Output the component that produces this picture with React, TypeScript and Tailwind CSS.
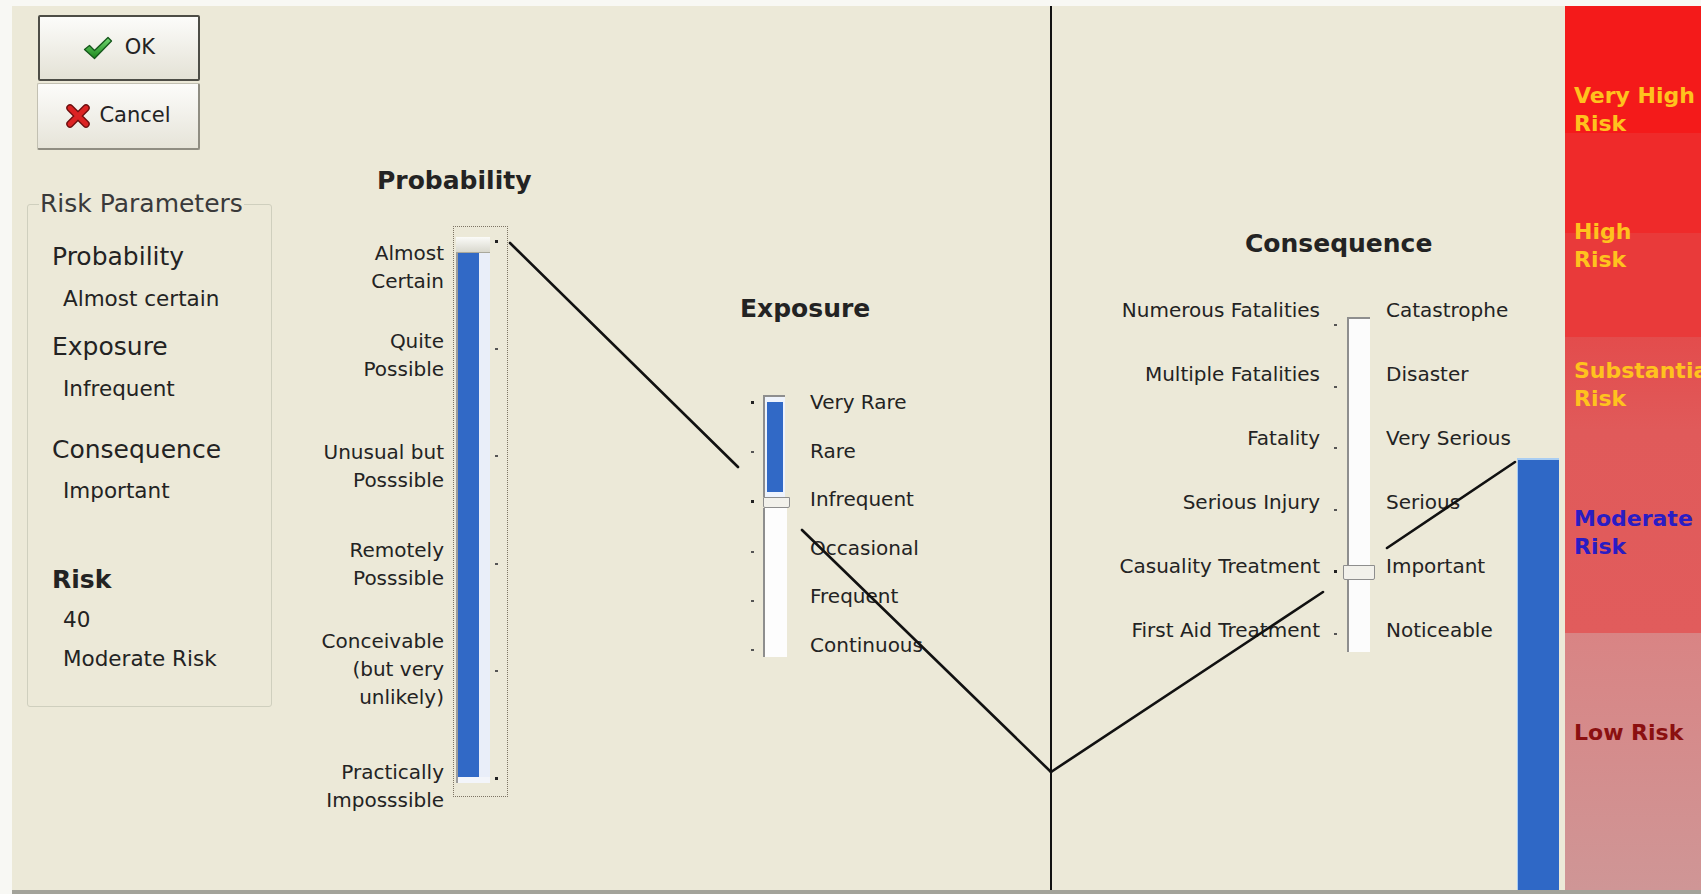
import React from 'react'

const probLabels = [
  { lines: ['Almost', 'Certain'], mt: 'mt-0' },
  { lines: ['Quite', 'Possible'], mt: 'mt-[32px]' },
  { lines: ['Unusual but', 'Posssible'], mt: 'mt-[54.7px]' },
  { lines: ['Remotely', 'Posssible'], mt: 'mt-[42.7px]' },
  { lines: ['Conceivable', '(but very', 'unlikely)'], mt: 'mt-[35px]' },
  { lines: ['Practically', 'Imposssible'], mt: 'mt-[46.3px]' },
]

const exposureLabels = ['Very Rare', 'Rare', 'Infrequent', 'Occasional', 'Frequent', 'Continuous']

const consLeft = [
  'Numerous Fatalities',
  'Multiple Fatalities',
  'Fatality',
  'Serious Injury',
  'Casuality Treatment',
  'First Aid Treatment',
]

const consRight = ['Catastrophe', 'Disaster', 'Very Serious', 'Serious', 'Important', 'Noticeable']

function CheckIcon() {
  return (
    <svg width="30" height="24" viewBox="0 0 30 24">
      <defs>
        <linearGradient id="okg" x1="0" y1="0" x2="0" y2="1">
          <stop offset="0" stopColor="#72d872" />
          <stop offset="1" stopColor="#1b861b" />
        </linearGradient>
      </defs>
      <path
        d="M1.5 13.5 L6.5 9.5 L11.5 14.5 L25 1.5 L28.5 5 L11.5 22.5 Z"
        fill="url(#okg)"
        stroke="#14561a"
        strokeWidth="1.3"
        strokeLinejoin="round"
      />
    </svg>
  )
}

function CrossIcon() {
  return (
    <svg width="26" height="24" viewBox="0 0 26 24">
      <path d="M5 4 L21 20 M21 4 L5 20" stroke="#6e0f0f" strokeWidth="7.5" strokeLinecap="round" />
      <path d="M5 4 L21 20 M21 4 L5 20" stroke="#dc2323" strokeWidth="4.8" strokeLinecap="round" />
    </svg>
  )
}

function Tick({ dot }: { dot?: boolean }) {
  return dot ? (
    <div className="w-[3px] h-[3px] bg-[#222]" />
  ) : (
    <div className="w-[3px] h-[2px] bg-[#555]" />
  )
}

export default function App() {
  return (
    <div className="relative w-[1701px] h-[894px] overflow-hidden bg-[#f8f8f4] pt-[6px] pl-[12px] flex flex-col font-['DejaVu_Sans',sans-serif] text-[#232323]">
      <div className="flex h-[884px] shrink-0 bg-[#ece9d8]">
        {/* left panel */}
        <div className="w-[278px] shrink-0 flex flex-col items-start">
          <button className="mt-[9px] ml-[26px] w-[162px] h-[66px] flex items-center justify-center gap-[12px] border-2 border-[#4d4d46] rounded-[2px] bg-linear-to-b from-[#fcfcfa] to-[#e4e2d6] text-[21px]">
            <CheckIcon />
            <span>OK</span>
          </button>
          <button className="mt-[2px] ml-[25px] w-[163px] h-[67px] flex items-center justify-center gap-[8px] border border-[#c2c0b2] border-r-2 border-b-2 border-r-[#8f8d82] border-b-[#8f8d82] rounded-[2px] bg-linear-to-b from-[#fcfcfa] to-[#e6e4d9] text-[21px]">
            <CrossIcon />
            <span>Cancel</span>
          </button>

          <fieldset className="mt-[39px] ml-[15px] w-[245px] border border-[#cfcfbe] rounded-[3px] pl-[11px] pb-[33px]">
            <legend className="px-[1px] text-[25px] leading-[30px] text-[#3a3a3a]">Risk Parameters</legend>
            <div className="ml-[13px] mt-[22.5px] text-[25px] leading-[30px]">Probability</div>
            <div className="ml-[24px] mt-[13px] text-[21.5px] leading-[28px]">Almost certain</div>
            <div className="ml-[13px] mt-[19px] text-[25px] leading-[30px]">Exposure</div>
            <div className="ml-[24px] mt-[13.4px] text-[21.5px] leading-[28px]">Infrequent</div>
            <div className="ml-[13px] mt-[32px] text-[25px] leading-[30px]">Consequence</div>
            <div className="ml-[24px] mt-[12px] text-[21.5px] leading-[28px]">Important</div>
            <div className="ml-[13px] mt-[60px] text-[25px] leading-[30px] font-bold">Risk</div>
            <div className="ml-[24px] mt-[11px] text-[21.5px] leading-[28px]">40</div>
            <div className="ml-[24px] mt-[11px] text-[21.5px] leading-[28px]">Moderate Risk</div>
          </fieldset>
        </div>

        {/* probability */}
        <div className="w-[250px] shrink-0">
          <div className="mt-[160px] pl-[87px] font-bold text-[25px] leading-[30px] whitespace-nowrap">Probability</div>
          <div className="mt-[30px] flex items-start">
            <div className="w-[154px] shrink-0 pt-[13px] text-right text-[20px] leading-[28px] whitespace-nowrap">
              {probLabels.map((l) => (
                <div key={l.lines[0]} className={l.mt}>
                  {l.lines.map((t) => (
                    <div key={t}>{t}</div>
                  ))}
                </div>
              ))}
            </div>
            <div className="ml-[9px] w-[55px] h-[571px] shrink-0 border border-dotted border-[#7d7464] flex">
              <div className="ml-[2px] w-[34px] shrink-0 flex flex-col pt-[10px]">
                <div className="h-[16px] w-[34px] bg-linear-to-b from-[#fbfbf8] to-[#d9d8ce] border-b border-[#a9a89c]" />
                <div className="flex h-[524px] border-l-2 border-[#9c9c9c]">
                  <div className="w-[21px] bg-[#3169c6]" />
                  <div className="w-[11px] bg-[#e9eef9]" />
                </div>
                <div className="h-[6px] border-l-2 border-[#9c9c9c] bg-[#f3f5fa]" />
              </div>
              <div className="w-[17px] shrink-0 pl-[5px] pt-[13px] flex flex-col gap-[105.2px]">
                <Tick dot />
                <Tick />
                <Tick />
                <Tick />
                <Tick />
                <Tick dot />
              </div>
            </div>
          </div>
        </div>

        {/* exposure */}
        <div className="ml-[200px] w-[160px] shrink-0">
          <div className="mt-[288px] font-bold text-[25px] leading-[30px] whitespace-nowrap">Exposure</div>
          <div className="mt-[65px] flex items-start">
            <div className="w-[23px] shrink-0 pl-[11px] pt-[12px] flex flex-col gap-[47.2px]">
              <Tick dot />
              <Tick />
              <Tick dot />
              <Tick />
              <Tick />
              <Tick />
            </div>
            <div className="w-[27px] shrink-0 pt-[6px] flex flex-col">
              <div className="w-[22px] border-l-2 border-t-2 border-[#8e8e8e] bg-[#eef3fc] pt-[5px] pl-[2px] pb-[5px]">
                <div className="w-[16px] h-[90px] bg-[#3169c6]" />
              </div>
              <div className="w-[27px] h-[11px] border border-[#8e8e8e] bg-[#f2f1eb] rounded-b-[2px]" />
              <div className="w-[24px] h-[149px] border-l-2 border-[#8e8e8e] bg-[#fdfdfd]" />
            </div>
            <div className="ml-[20px] shrink-0 flex flex-col gap-[21.6px] text-[20px] leading-[27px] whitespace-nowrap">
              {exposureLabels.map((t) => (
                <div key={t}>{t}</div>
              ))}
            </div>
          </div>
        </div>

        {/* divider */}
        <div className="ml-[150px] w-[2px] shrink-0 bg-[#111]" />

        {/* consequence */}
        <div className="w-[463px] shrink-0">
          <div className="mt-[223px] pl-[193px] font-bold text-[25px] leading-[30px] whitespace-nowrap">Consequence</div>
          <div className="mt-[38px] flex items-start">
            <div className="w-[268px] shrink-0 text-right text-[20px] leading-[27px] whitespace-nowrap">
              {consLeft.map((t) => (
                <div key={t} className="h-[64px]">
                  {t}
                </div>
              ))}
            </div>
            <div className="w-[27px] shrink-0 pl-[14px] pt-[27px] flex flex-col gap-[59.6px]">
              <Tick />
              <Tick />
              <Tick />
              <Tick />
              <Tick dot />
              <Tick />
            </div>
            <div className="w-[23px] shrink-0 pt-[20px] flex flex-col">
              <div className="w-[23px] h-[248px] border-l-2 border-t-2 border-[#8e8e8e] bg-[#fcfcfc]" />
              <div className="-ml-[4px] w-[32px] h-[15px] border border-[#8e8e8e] bg-[#f2f1eb] rounded-b-[2px]" />
              <div className="w-[23px] h-[72px] border-l-2 border-[#8e8e8e] bg-[#fcfcfc]" />
            </div>
            <div className="ml-[16px] w-[129px] shrink-0 overflow-hidden whitespace-nowrap text-[20px] leading-[27px]">
              {consRight.map((t) => (
                <div key={t} className="h-[64px]">
                  {t}
                </div>
              ))}
            </div>
          </div>
        </div>

        {/* risk value bar */}
        <div className="ml-[2px] mt-[452px] w-[42px] shrink-0 bg-[#2f68c6] border-t-2 border-l border-[#a9cdf2]" />

        {/* risk scale */}
        <div className="ml-[6px] flex-1 overflow-hidden whitespace-nowrap pl-[9px] font-bold text-[22px] leading-[28px] bg-[linear-gradient(to_bottom,#f41a1a_0px,#f41a1a_127px,#ef2a2a_127px,#ef2a2a_227px,#e93a3a_227px,#e93a3a_331px,#e34c4c_331px,#e05a5a_424px,#e15c5c_627px,#d98484_627px,#cf9696_884px)]">
          <div className="mt-[75.5px] text-[#ffc21e]">
            Very High
            <br />
            Risk
          </div>
          <div className="mt-[80px] text-[#ffc21e]">
            High
            <br />
            Risk
          </div>
          <div className="mt-[83px] text-[#ffc21e]">
            Substantial
            <br />
            Risk
          </div>
          <div className="mt-[92px] text-[#2a1cc4]">
            Moderate
            <br />
            Risk
          </div>
          <div className="mt-[158px] text-[#8b1010]">Low Risk</div>
        </div>
      </div>
      <div className="h-[4px] bg-[#a3a39a]" />

      {/* connecting lines */}
      <svg className="absolute inset-0 pointer-events-none" width="1701" height="894">
        <g stroke="#111" strokeWidth="2.6" strokeLinecap="round">
          <line x1="510" y1="243" x2="738" y2="467" />
          <line x1="802" y1="530" x2="1051" y2="772" />
          <line x1="1051" y1="772" x2="1323" y2="592" />
          <line x1="1387" y1="548" x2="1515" y2="462" />
        </g>
      </svg>
    </div>
  )
}
